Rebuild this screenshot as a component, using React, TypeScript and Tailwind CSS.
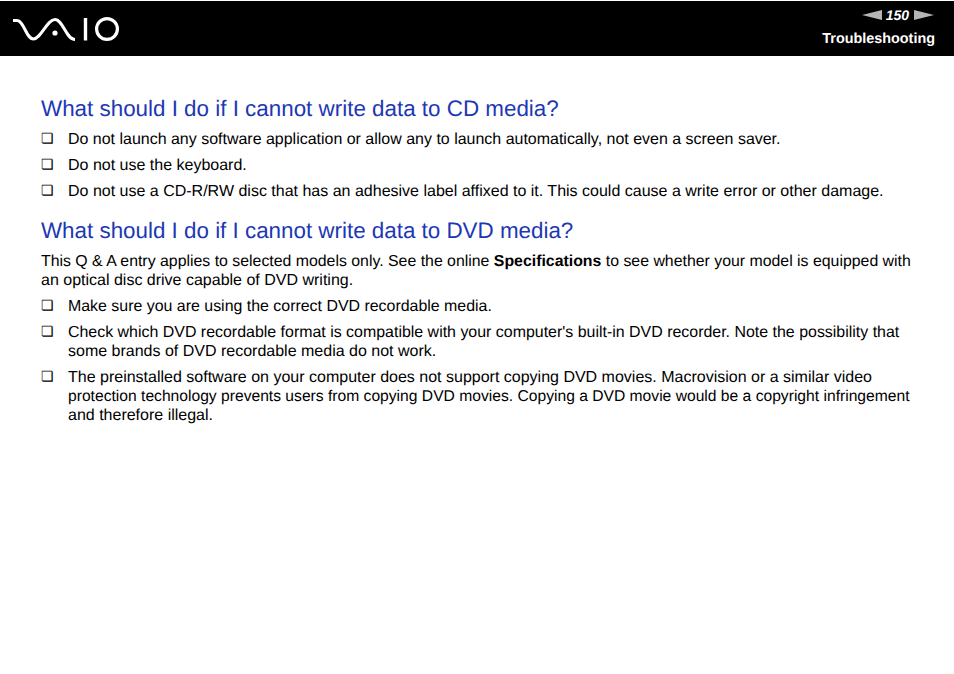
const bullet = "flex pl-[41px] pr-[30px]";

function Item({ children, className = "" }: { children: React.ReactNode; className?: string }) {
  return (
    <li className={`${bullet} ${className}`}>
      <span className="w-[27px] shrink-0 text-[14px] font-bold font-['DejaVu_Sans',sans-serif]">❏</span>
      <span>{children}</span>
    </li>
  );
}

function Logo() {
  return (
    <svg width="120" height="56" viewBox="0 0 120 56" fill="none" stroke="#fff">
      <path d="M13 19.5 H17 C24 19.5 26 38 33.5 38 C41 38 47 18.5 55 18.5 C63 18.5 66 38.5 75 38.5" strokeWidth="3" />
      <circle cx="55" cy="32" r="2.6" fill="#fff" stroke="none" />
      <path d="M85.5 17 V39.5" strokeWidth="3.4" />
      <circle cx="107" cy="28" r="10.4" strokeWidth="3.2" />
    </svg>
  );
}

export default function App() {
  return (
    <div className="min-h-[674px] bg-white text-[16px] leading-[19px] text-black [text-rendering:geometricPrecision] font-['Liberation_Sans',Arial,sans-serif]">
      <header className="h-[56px] bg-black border-t border-white flex justify-between">
        <Logo />
        <div className="pr-[19px] pt-[5px] flex flex-col items-end text-white">
          <div className="flex items-center gap-[4px] mr-[1px] h-[18px] text-[14px] italic font-bold">
            <span className="w-0 h-0 border-y-[5px] border-y-transparent border-r-[20px] border-r-[#b5b5b5]" />
            <span className="mr-[1px]">150</span>
            <span className="w-0 h-0 border-y-[5px] border-y-transparent border-l-[20px] border-l-[#b5b5b5]" />
          </div>
          <div className="mt-[7px] text-[14.4px] leading-[16px] font-bold">Troubleshooting</div>
        </div>
      </header>

      <h2 className="pl-[41px] mt-[40px] text-[22.4px] leading-[26px] text-[#1c38b4]">What should I do if I cannot write data to CD media?</h2>
      <ul className="mt-[8px] flex flex-col gap-[7px]">
        <Item><span className="text-[15.97px]">Do not launch any software application or allow any to launch automatically, not even a screen saver.</span></Item>
        <Item>Do not use the keyboard.</Item>
        <Item>Do not use a CD-R/RW disc that has an adhesive label affixed to it. This could cause a write error or other damage.</Item>
      </ul>

      <h2 className="pl-[41px] mt-[17px] text-[22.38px] leading-[26px] text-[#1c38b4]">What should I do if I cannot write data to DVD media?</h2>
      <p className="pl-[41px] pr-[30px] mt-[8px]">
        <span className="text-[15.86px]">This Q &amp; A entry applies to selected models only. See the online <b>Specifications</b> to see whether your model is equipped with</span>
        <br />
        an optical disc drive capable of DVD writing.
      </p>
      <ul className="mt-[7px] flex flex-col gap-[7px]">
        <Item><span className="text-[15.93px]">Make sure you are using the correct DVD recordable media.</span></Item>
        <Item>
          <span className="text-[15.95px]">Check which DVD recordable format is compatible with your computer's built-in DVD recorder. Note the possibility that</span>
          <br />
          some brands of DVD recordable media do not work.
        </Item>
        <Item>
          The preinstalled software on your computer does not support copying DVD movies. Macrovision or a similar video
          <br />
          <span className="text-[15.65px]">protection technology prevents users from copying DVD movies. Copying a DVD movie would be a copyright infringement</span>
          <br />
          and therefore illegal.
        </Item>
      </ul>
    </div>
  );
}
